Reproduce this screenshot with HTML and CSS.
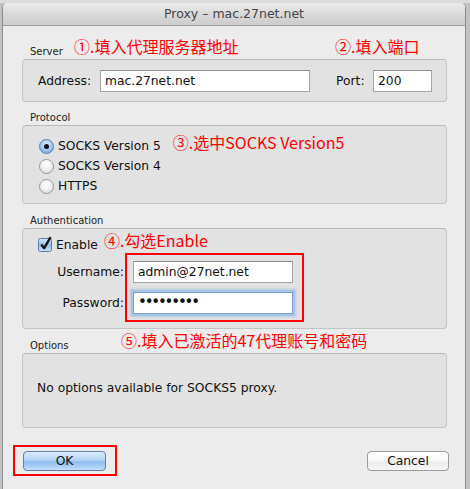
FILE: index.html
```html
<!DOCTYPE html>
<html>
<head>
<meta charset="utf-8">
<link rel="stylesheet" href="styles.css">
</head>
<body>
<div class="screen">
  <div class="window">
    <div class="titlebar">Proxy – mac.27net.net</div>
    <div class="content">
      <div class="head head-server">
        <span class="glabel">Server</span>
        <span class="note">①.填入代理服务器地址</span>
        <span class="note">②.填入端口</span>
      </div>
      <div class="box box-server">
        <span class="flabel lbl-address">Address:</span>
        <div class="field field-address">mac.27net.net</div>
        <span class="flabel lbl-port">Port:</span>
        <div class="field field-port">200</div>
      </div>

      <div class="head head-plain"><span class="glabel">Protocol</span></div>
      <div class="box box-protocol">
        <div class="radio-row">
          <span class="radio radio-on"><span class="dot"></span></span>
          <span class="rlabel">SOCKS Version 5</span>
          <span class="note note3">③.选中SOCKS Version5</span>
        </div>
        <div class="radio-row">
          <span class="radio"></span>
          <span class="rlabel">SOCKS Version 4</span>
        </div>
        <div class="radio-row">
          <span class="radio"></span>
          <span class="rlabel">HTTPS</span>
        </div>
      </div>

      <div class="head head-plain head-auth"><span class="glabel">Authentication</span></div>
      <div class="box box-auth">
        <div class="check-row">
          <svg class="checkbox" width="15" height="16" viewBox="0 0 15 16">
            <defs>
              <linearGradient id="cbg" x1="0" y1="0" x2="0" y2="1">
                <stop offset="0" stop-color="#dbe9f8"/>
                <stop offset="0.5" stop-color="#93bdec"/>
                <stop offset="1" stop-color="#cfe3f8"/>
              </linearGradient>
            </defs>
            <rect x="0.5" y="2.5" width="13" height="13" rx="2" fill="url(#cbg)" stroke="#5d7ba6"/>
            <path d="M3.2 8.6 L6.2 12.2 L12.6 1.2" fill="none" stroke="#141414" stroke-width="2.3" stroke-linejoin="round"/>
          </svg>
          <span class="rlabel">Enable</span>
          <span class="note note4">④.勾选Enable</span>
        </div>
        <div class="form-row">
          <span class="flabel ulabel">Username:</span>
          <div class="field field-user">admin@27net.net</div>
        </div>
        <div class="form-row form-row-pass">
          <span class="flabel ulabel">Password:</span>
          <div class="field field-user field-focus"><span class="dots">•••••••••</span></div>
        </div>
        <div class="mark mark-auth"></div>
      </div>

      <div class="head head-options">
        <span class="glabel">Options</span>
        <span class="note">⑤.填入已激活的47代理账号和密码</span>
      </div>
      <div class="box box-options">
        <span class="otext">No options available for SOCKS5 proxy.</span>
      </div>

      <div class="buttons">
        <div class="mark-ok">
          <div class="btn btn-default">OK</div>
        </div>
        <div class="btn btn-cancel">Cancel</div>
      </div>
    </div>
  </div>
</div>
</body>
</html>
```

FILE: styles.css
```css
* { box-sizing: border-box; }
html, body { margin: 0; padding: 0; }
body {
  width: 470px;
  height: 489px;
  overflow: hidden;
  background: #c2c2c2;
  font-family: "DejaVu Sans", "Liberation Sans", sans-serif;
  font-size: 12.3px;
  color: #111;
}
.screen {
  width: 470px;
  height: 489px;
  padding: 3px 4px 0 2px;
  background: linear-gradient(#dcdcdc 0, #dcdcdc 3px, #c2c2c2 3px);
}
.window {
  width: 464px;
  height: 486px;
  background: #ececec;
  border-left: 1px solid #8c8c8c;
  border-right: 1px solid #8c8c8c;
  border-radius: 5px 5px 0 0;
  overflow: hidden;
}
.titlebar {
  height: 23px;
  line-height: 22px;
  text-align: center;
  font-size: 12.5px;
  color: #444;
  background: linear-gradient(#ececec, #d9d9d9 50%, #cdcdcd);
  border-bottom: 1px solid #9b9b9b;
}
.content {
  padding-left: 19px;
}
.head {
  display: grid;
  align-items: end;
  padding-left: 8px;
}
.head-server {
  height: 33px;
  grid-template-columns: 44px 261px auto;
}
.head-plain {
  height: 23px;
  grid-template-columns: auto;
}
.head-auth { height: 24px; }
.head-options {
  height: 24px;
  grid-template-columns: 91px auto;
}
.glabel {
  font-size: 10px;
  line-height: 12px;
  color: #222;
  margin-bottom: 1px;
  align-self: end;
}
.note {
  font-family: "Noto Sans CJK SC", "Noto Sans", sans-serif;
  font-size: 16px;
  line-height: 20px;
  color: #ff0000;
  white-space: nowrap;
  align-self: start;
}
.head-server .note { margin-top: 10px; }
.head-options .note { margin-top: 1px; }

.box {
  width: 425px;
  background: #e2e2e2;
  border: 1px solid #c4c4c4;
  border-top-color: #b9b9b9;
  border-radius: 4px;
}
.box-server {
  display: flex;
  align-items: center;
  height: 43px;
  padding-left: 15px;
}
.flabel { white-space: nowrap; }
.lbl-address { width: 62px; }
.lbl-port { width: 37px; margin-left: 26px; }
.field {
  height: 22px;
  line-height: 21px;
  background: #fff;
  border: 1px solid #a5a5a5;
  border-top-color: #8d8d8d;
  padding-left: 4px;
  white-space: nowrap;
}
.field-address { width: 210px; }
.field-port { width: 59px; }

.box-protocol {
  height: 79px;
  padding: 10px 0 0 16px;
}
.radio-row {
  display: flex;
  align-items: center;
  height: 20px;
}
.radio {
  width: 15px;
  height: 15px;
  border-radius: 50%;
  border: 1px solid #989898;
  background: radial-gradient(circle at 50% 30%, #ffffff 0, #f3f3f3 40%, #d6d6d6 100%);
  display: flex;
  align-items: center;
  justify-content: center;
  margin-right: 4px;
  flex: none;
}
.radio-on {
  border-color: #5a7daa;
  background: radial-gradient(circle at 50% 35%, #e4effb 0, #9fc4ee 55%, #6a9bd6 100%);
}
.dot {
  width: 5px;
  height: 5px;
  border-radius: 50%;
  background: #111;
}
.note3 { margin-left: 12px; margin-top: -4px; }

.box-auth {
  position: relative;
  height: 101px;
  padding-top: 6px;
}
.check-row {
  display: flex;
  align-items: center;
  height: 20px;
  padding-left: 15px;
}
.checkbox { margin-right: 3px; margin-top: -2px; flex: none; }
.note4 { margin-left: 6px; margin-top: -5px; }
.form-row {
  display: flex;
  align-items: center;
  margin-top: 6px;
}
.form-row-pass { margin-top: 9px; }
.ulabel {
  width: 101px;
  text-align: right;
  margin-right: 9px;
}
.field-user { width: 160px; }
.field-focus {
  border-color: #7c9fcf;
  box-shadow: 0 0 0 2px #a6c3e8, 0 0 2px 3px rgba(140, 175, 225, 0.5);
}
.dots {
  font-size: 15px;
  letter-spacing: -2.2px;
  color: #111;
  position: relative;
  top: -1px;
}
.mark {
  position: absolute;
  border: 2px solid #ff0000;
}
.mark-auth {
  left: 102px;
  top: 24px;
  width: 179px;
  height: 69px;
}

.box-options {
  height: 75px;
  padding: 24px 0 0 14px;
  line-height: 20px;
}

.buttons {
  width: 436px;
  display: flex;
  justify-content: space-between;
  align-items: flex-start;
  margin-top: 17px;
  margin-left: -9px;
}
.mark-ok {
  border: 2px solid #ff0000;
  padding: 4px 9px 3px 8px;
}
.btn {
  height: 20px;
  line-height: 18px;
  text-align: center;
  font-size: 12.3px;
  border-radius: 4px;
}
.btn-default {
  width: 83px;
  border: 1px solid #5f7fae;
  background: linear-gradient(#dcebfb 0, #b3d3f5 45%, #8dbdf0 55%, #c3e0fb 100%);
}
.btn-cancel {
  width: 82px;
  margin-top: 6px;
  border: 1px solid #9a9a9a;
  background: linear-gradient(#ffffff 0, #f7f7f7 50%, #ececec 55%, #f6f6f6 100%);
}
```
